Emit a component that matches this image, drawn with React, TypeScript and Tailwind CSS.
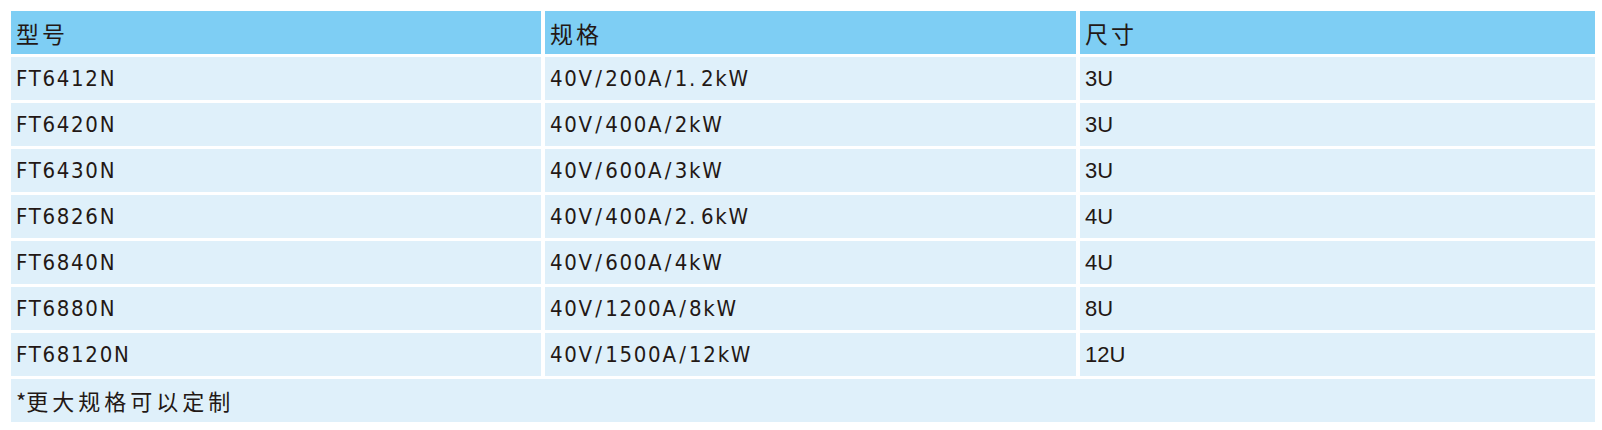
import React from 'react';

const rows = [
  ['FT6412N', '40V/200A/1.2kW', '3U'],
  ['FT6420N', '40V/400A/2kW', '3U'],
  ['FT6430N', '40V/600A/3kW', '3U'],
  ['FT6826N', '40V/400A/2.6kW', '4U'],
  ['FT6840N', '40V/600A/4kW', '4U'],
  ['FT6880N', '40V/1200A/8kW', '8U'],
  ['FT68120N', '40V/1500A/12kW', '12U'],
];

const cjk = "font-['Noto_Sans_CJK_SC','Noto_Sans',sans-serif]";
const narrow = "font-['DejaVu_Sans_Condensed','DejaVu_Sans','Noto_Sans_CJK_SC',sans-serif] font-stretch-condensed";

// the source face sets "/" and "." wider than DejaVu does
const Spec = ({ text }: { text: string }) => (
  <>
    {text.split('').map((c, i) =>
      c === '/' ? (
        <span key={i} className="mx-[1.5px]">/</span>
      ) : c === '.' ? (
        <span key={i} className="mr-[4px]">.</span>
      ) : (
        <React.Fragment key={i}>{c}</React.Fragment>
      )
    )}
  </>
);

export default function App() {
  return (
    <div className="w-[1602px] h-[430px] bg-white pt-[11px] pl-[11px] text-[#231815]">
      <div className="grid grid-cols-[530px_531px_515px] gap-x-[4px] gap-y-[3px] auto-rows-[43px]">
        {/* header */}
        {['型号', '规格', '尺寸'].map((h) => (
          <div key={h} className={`flex items-center bg-[#7ecef4] pl-[5px] pt-[1px] text-[23px] tracking-[3px] ${cjk}`}>
            {h}
          </div>
        ))}

        {rows.map((r) => (
          <React.Fragment key={r[0]}>
            <div className={`flex items-center bg-[#dff0fa] pl-[5px] text-[22px] tracking-[1.7px] ${narrow}`}>{r[0]}</div>
            <div className={`flex items-center bg-[#dff0fa] pl-[5px] text-[22px] tracking-[1.7px] ${narrow}`}>
              <Spec text={r[1]} />
            </div>
            <div className="flex items-center bg-[#dff0fa] pl-[5px] text-[22px] font-['Liberation_Sans',sans-serif]">{r[2]}</div>
          </React.Fragment>
        ))}

        <div className={`col-span-3 flex items-center bg-[#dff0fa] pl-[5px] text-[22px] ${cjk}`}>
          <span>*</span>
          <span className="tracking-[4px]">更大规格可以定制</span>
        </div>
      </div>
    </div>
  );
}
